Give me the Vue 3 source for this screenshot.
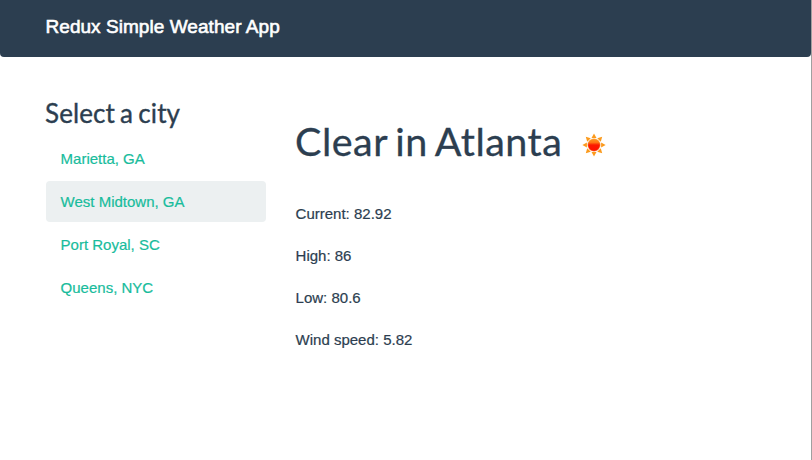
<script setup>
import { ref } from 'vue'

const cities = ['Marietta, GA', 'West Midtown, GA', 'Port Royal, SC', 'Queens, NYC']
const selected = ref(1)
const readings = ['Current: 82.92', 'High: 86', 'Low: 80.6', 'Wind speed: 5.82']
const rays = [0, 45, 90, 135, 180, 225, 270, 315]
</script>

<template>
  <div class="page">
    <header class="navbar"><a class="brand">Redux Simple Weather App</a></header>
    <main class="content">
      <aside class="sidebar">
        <h3 class="side-title">Select a city</h3>
        <ul class="pills">
          <li
            v-for="(city, i) in cities"
            :key="city"
            class="pill"
            :class="{ active: i === selected }"
            @click="selected = i"
          >{{ city }}</li>
        </ul>
      </aside>
      <section class="weather">
        <h1 class="heading">
          <span class="heading-text">Clear in Atlanta</span>
          <svg class="sun" viewBox="-12 -12 24 24" width="24" height="24">
            <defs>
              <linearGradient id="core" x1="0" y1="0" x2="0" y2="1">
                <stop offset="0" stop-color="#ff9a1f" />
                <stop offset="0.3" stop-color="#ff7414" />
                <stop offset="0.5" stop-color="#fb1a00" />
                <stop offset="1" stop-color="#ff1000" />
              </linearGradient>
            </defs>
            <path
              v-for="r in rays"
              :key="r"
              d="M0-11.6L2.5-7.1H-2.5Z"
              fill="#fb9a1c"
              :transform="`rotate(${r})`"
            />
            <circle r="6.2" fill="url(#core)" stroke="#f9a03c" stroke-width="0.5" />
          </svg>
        </h1>
        <p v-for="line in readings" :key="line" class="reading">{{ line }}</p>
      </section>
    </main>
  </div>
</template>

<style>
body {
  background: #fff;
}
</style>

<style scoped>
.page {
  box-sizing: border-box;
  width: 812px;
  height: 460px;
  overflow: hidden;
  border-right: 1px solid #a0a0a0;
  background: #fff;
  color: #2c3e50;
  font: 15px/21px "Liberation Sans", Arial, sans-serif;
}
.navbar {
  box-sizing: border-box;
  height: 57px;
  padding: 16px 45.5px;
  border-radius: 0 0 4px 4px;
  background: #2c3e50;
}
.brand {
  color: #fff;
  font-size: 19px;
  line-height: 21px;
  letter-spacing: 0.05px;
  -webkit-text-stroke: 0.6px #fff;
}
.content {
  display: flex;
  gap: 29.6px;
  padding: 0 46px;
}
.sidebar {
  width: 220px;
  padding-top: 42px;
}
.side-title {
  margin: 0 0 10px -1px;
  font: 400 26px/29px Lato, sans-serif;
  letter-spacing: 0.1px;
  word-spacing: -1.6px;
  -webkit-text-stroke: 0.35px #2c3e50;
}
.pills {
  display: flex;
  flex-direction: column;
  gap: 2px;
  margin: 0;
  padding: 0;
  list-style: none;
}
.pill {
  padding: 10px 14.6px;
  border-radius: 4px;
  color: #18bc9c;
  -webkit-text-stroke: 0.2px #18bc9c;
  cursor: pointer;
}
.pill.active {
  background: #ecf0f1;
}
.weather {
  padding-top: 62px;
}
.heading {
  display: flex;
  align-items: center;
  gap: 20px;
  margin: 0 0 41px -0.6px;
  font: 400 39.5px/43px Lato, sans-serif;
  letter-spacing: 0.5px;
  word-spacing: -2.5px;
  -webkit-text-stroke: 0.3px #2c3e50;
}
.sun {
  margin-top: 9px;
}
.reading {
  margin: 0 0 21px;
  -webkit-text-stroke: 0.2px #2c3e50;
}
</style>
